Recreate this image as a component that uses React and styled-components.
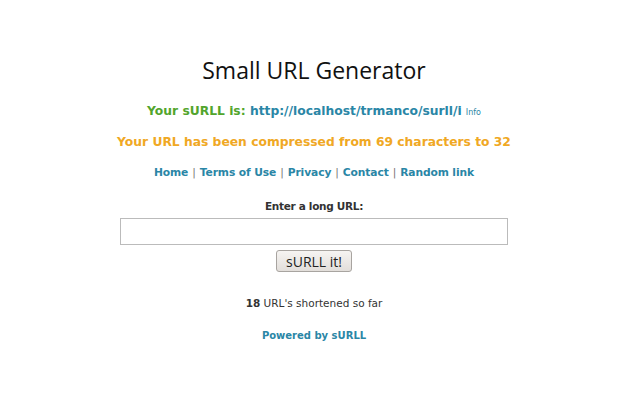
import styled, { createGlobalStyle } from 'styled-components'

const GlobalStyle = createGlobalStyle`
    body {
        margin: 0;
        background: #fff;
        font-family: "DejaVu Sans", "Open Sans", sans-serif;
        color: #333;
    }
`

const Page = styled.div`
    display: flex;
    flex-direction: column;
    align-items: center;
    padding: 55px 12px 0 0;
`

const Title = styled.h1`
    margin: 0;
    font-family: "Open Sans", "DejaVu Sans", sans-serif;
    font-weight: normal;
    font-size: 23px;
    line-height: 30px;
    color: #111;
`

const Message = styled.p`
    margin: ${(p) => p.$top}px 0 0;
    font-weight: bold;
    font-size: 12.3px;
    line-height: 16px;
    color: ${(p) => p.$color};
`

const Link = styled.a`
    color: #2a86a6;
    text-decoration: none;
    font-weight: bold;
`

const Small = styled.a`
    color: #2a86a6;
    font-size: 8px;
    font-weight: normal;
    text-decoration: none;
    margin-left: 4px;
`

const Nav = styled.nav`
    margin-top: 15px;
    font-size: 10.7px;
    line-height: 16px;
    letter-spacing: -0.1px;
`

const Sep = styled.span`
    margin: 0 4px;
    color: #777;
    font-weight: normal;
`

const Label = styled.label`
    margin-top: 18px;
    font-weight: bold;
    font-size: 10.5px;
    letter-spacing: -0.3px;
    line-height: 14px;
    color: #333;
`

const UrlInput = styled.input`
    box-sizing: border-box;
    margin-top: 5px;
    width: 388px;
    height: 27px;
    border: 1px solid #bbb;
    background: #fff;
    outline: none;
`

const SubmitButton = styled.button`
    margin-top: 5px;
    width: 76px;
    height: 22px;
    padding: 0;
    font-family: "Open Sans", "DejaVu Sans", sans-serif;
    font-size: 14px;
    color: #222;
    background: linear-gradient(#f6f4f2, #e2deda);
    border: 1px solid #a8a4a0;
    border-radius: 3px;
`

const Stats = styled.p`
    margin: 24px 0 0;
    font-size: 10.5px;
    line-height: 14px;
    color: #333;
    b {
        font-weight: bold;
    }
`

const Footer = styled.p`
    margin: 19px 0 0;
    font-size: 10px;
    line-height: 14px;
`

export default function App() {
    return (
        <>
            <GlobalStyle />
            <Page>
                <Title>Small URL Generator</Title>
                <Message $top={18} $color="#52a52c">
                    Your sURLL is: <Link href="#">http://localhost/trmanco/surll/i</Link>
                    <Small href="#">Info</Small>
                </Message>
                <Message $top={13} $color="#f0a824">
                    Your URL has been compressed from 69 characters to 32
                </Message>
                <Nav>
                    <Link href="#">Home</Link>
                    <Sep>|</Sep>
                    <Link href="#">Terms of Use</Link>
                    <Sep>|</Sep>
                    <Link href="#">Privacy</Link>
                    <Sep>|</Sep>
                    <Link href="#">Contact</Link>
                    <Sep>|</Sep>
                    <Link href="#">Random link</Link>
                </Nav>
                <Label htmlFor="url">Enter a long URL:</Label>
                <UrlInput id="url" type="text" />
                <SubmitButton>sURLL it!</SubmitButton>
                <Stats>
                    <b>18</b> URL's shortened so far
                </Stats>
                <Footer>
                    <Link href="#">Powered by sURLL</Link>
                </Footer>
            </Page>
        </>
    )
}
